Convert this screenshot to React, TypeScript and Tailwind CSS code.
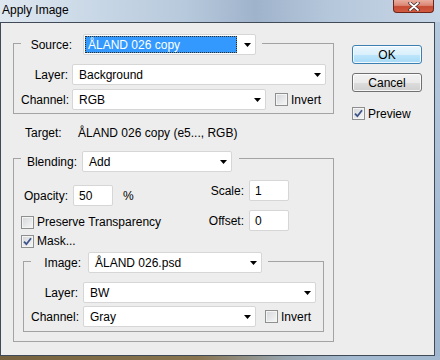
import React from "react";

const Arrow = () => (
  <svg width="7" height="4" viewBox="0 0 7 4" className="shrink-0">
    <path d="M0 0h7L3.5 4z" fill="#000" />
  </svg>
);

const Select = ({
  value,
  className = "",
  focus = false,
}: {
  value: string;
  className?: string;
  focus?: boolean;
}) => (
  <div
    className={`flex h-[21px] shrink-0 items-center rounded-[2px] border border-[#d6d6d6] bg-white pr-[4px] ${className}`}
  >
    {focus ? (
      <div className="ml-[1px] flex h-[17px] w-[152px] items-center border border-dotted border-[#3a2a10] bg-[#3399ff] pl-[2px] text-white">
        {value}
      </div>
    ) : (
      <span className="pl-[6px]">{value}</span>
    )}
    <div className="flex-1" />
    <Arrow />
  </div>
);

const Field = ({ value, className = "" }: { value: string; className?: string }) => (
  <div
    className={`flex h-[21px] w-[40px] shrink-0 items-center rounded-[2px] border border-[#d6d6d6] bg-white pl-[5px] ${className}`}
  >
    {value}
  </div>
);

const Check = ({ checked = false }: { checked?: boolean }) => (
  <div className="flex h-[13px] w-[13px] shrink-0 items-center justify-center border border-[#8e8f8f] bg-[linear-gradient(135deg,#d4d6d9,#f7f7f7)] shadow-[inset_0_0_0_1px_#f4f4f4]">
    {checked && (
      <svg width="9" height="9" viewBox="0 0 9 9">
        <path d="M1 4.6 L3.4 7.2 L8 1.2" fill="none" stroke="#3c5489" strokeWidth="1.8" />
      </svg>
    )}
  </div>
);

const Button = ({ label, primary = false }: { label: string; primary?: boolean }) => (
  <div
    className={`flex h-[19px] w-[70px] items-center justify-center rounded-[3px] border shadow-[inset_0_0_0_1px_rgba(255,255,255,0.8)] ${
      primary
        ? "border-[#3c7fb1] bg-[linear-gradient(#eaf6fd_0%,#d9f0fc_50%,#bee6fd_51%,#a7d9f5_100%)]"
        : "border-[#707070] bg-[linear-gradient(#f2f2f2_0%,#ebebeb_50%,#dddddd_51%,#cfcfcf_100%)]"
    }`}
  >
    {label}
  </div>
);

export default function App() {
  return (
    <div className="flex h-[360px] w-[440px] flex-col overflow-hidden bg-[linear-gradient(#b7cade,#a7bdd5_60%,#9fb6ce)] font-['Liberation_Sans',Arial,sans-serif] text-[12px] leading-[14px] text-black">
      {/* title bar */}
      <div className="flex h-[22px] shrink-0 items-start justify-between bg-[linear-gradient(90deg,#dfe8f1_0%,#ccdae8_18%,#b7c9dc_42%,#9fb3cb_58%,#b5c7db_75%,#c7d6e6_100%)] pr-[6px]">
        <span className="mt-[3px] pl-[2px]">Apply Image</span>
        <div className="flex h-[13px] w-[41px] items-center justify-center rounded-b-[4px] border border-t-0 border-[#6e2418] bg-[linear-gradient(#e9ad9f_0%,#dc8674_45%,#c64a33_55%,#d25b41_100%)]">
          <svg width="12" height="9" viewBox="0 0 12 9">
            <path d="M2 1 L10 8 M10 1 L2 8" stroke="#47302c" strokeWidth="3.4" strokeLinecap="round" />
            <path d="M2 1 L10 8 M10 1 L2 8" stroke="#fff" strokeWidth="1.8" strokeLinecap="round" />
          </svg>
        </div>
      </div>

      <div className="flex h-[334px] w-[435px] shrink-0 border border-[#414b58] bg-[#ededed]">
        {/* left column */}
        <div className="ml-[12px] flex w-[321px] flex-col">
          <fieldset className="mt-[9px] w-[321px] border border-[#a3a3a3] pb-[3px] pl-[7px]">
            <legend className="pt-[2px]">
              <div className="flex items-center pr-[6px]">
                <span className="w-[51px] text-right">Source:</span>
                <Select className="ml-[11px] w-[173px]" value="ÅLAND 026 copy" focus />
              </div>
            </legend>
            <div className="flex flex-col gap-[4px] pt-[9px]">
              <div className="flex items-center">
                <span className="w-[47px] text-right">Layer:</span>
                <Select className="ml-[4px] w-[254px]" value="Background" />
              </div>
              <div className="flex items-center">
                <span className="w-[47px] text-right">Channel:</span>
                <Select className="ml-[4px] w-[194px]" value="RGB" />
                <div className="ml-[9px]">
                  <Check />
                </div>
                <span className="ml-[3px]">Invert</span>
              </div>
            </div>
          </fieldset>

          <div className="mt-[12px] flex h-[14px] items-center pl-[12px]">
            <span className="w-[53px]">Target:</span>
            <span>ÅLAND 026 copy (e5..., RGB)</span>
          </div>

          <fieldset className="mt-[5px] w-[321px] border border-[#a3a3a3] pb-[9px] pl-[7px]">
            <legend className="pt-[6px]">
              <div className="flex items-center pr-[7px]">
                <span className="w-[56px] text-right">Blending:</span>
                <Select className="ml-[5px] w-[150px]" value="Add" />
              </div>
            </legend>
            <div className="flex">
              <div className="flex w-[178px] flex-col">
                <div className="mt-[13px] flex items-center">
                  <span className="w-[47px] text-right">Opacity:</span>
                  <Field className="ml-[5px]" value="50" />
                  <span className="ml-[10px]">%</span>
                </div>
                <div className="mt-[9px] flex h-[14px] items-center">
                  <Check />
                  <span className="ml-[3px]">Preserve Transparency</span>
                </div>
                <div className="mt-[5px] flex h-[14px] items-center">
                  <Check checked />
                  <span className="ml-[3px]">Mask...</span>
                </div>
              </div>
              <div className="flex flex-col">
                <div className="mt-[8px] flex items-center">
                  <span className="w-[45px] text-right">Scale:</span>
                  <Field className="ml-[5px]" value="1" />
                </div>
                <div className="mt-[9px] flex items-center">
                  <span className="w-[45px] text-right">Offset:</span>
                  <Field className="ml-[5px]" value="0" />
                </div>
              </div>
            </div>

            <fieldset className="ml-[2px] mt-[1px] w-[301px] border border-[#a3a3a3] pb-[4px] pl-[7px]">
              <legend className="pt-[3px]">
                <div className="flex items-center pr-[6px]">
                  <span className="w-[50px] text-right">Image:</span>
                  <Select className="ml-[7px] w-[174px]" value="ÅLAND 026.psd" />
                </div>
              </legend>
              <div className="flex flex-col gap-[3px] pt-[9px]">
                <div className="flex items-center">
                  <span className="w-[47px] text-right">Layer:</span>
                  <Select className="ml-[5px] w-[233px]" value="BW" />
                </div>
                <div className="flex items-center">
                  <span className="w-[47px] text-right">Channel:</span>
                  <Select className="ml-[5px] w-[173px]" value="Gray" />
                  <div className="ml-[9px]">
                    <Check />
                  </div>
                  <span className="ml-[3px]">Invert</span>
                </div>
              </div>
            </fieldset>
          </fieldset>
        </div>

        {/* buttons */}
        <div className="ml-[18px] mt-[22px] flex flex-col">
          <Button label="OK" primary />
          <div className="mt-[9px]">
            <Button label="Cancel" />
          </div>
          <div className="mt-[15px] flex h-[13px] items-center">
            <Check checked />
            <span className="ml-[3px]">Preview</span>
          </div>
        </div>
      </div>

      <div className="h-[4px] w-full bg-[linear-gradient(90deg,#77623f_0%,#8a7551_45%,#98a6b0_65%,#a3b9d0_80%)]" />
    </div>
  );
}
